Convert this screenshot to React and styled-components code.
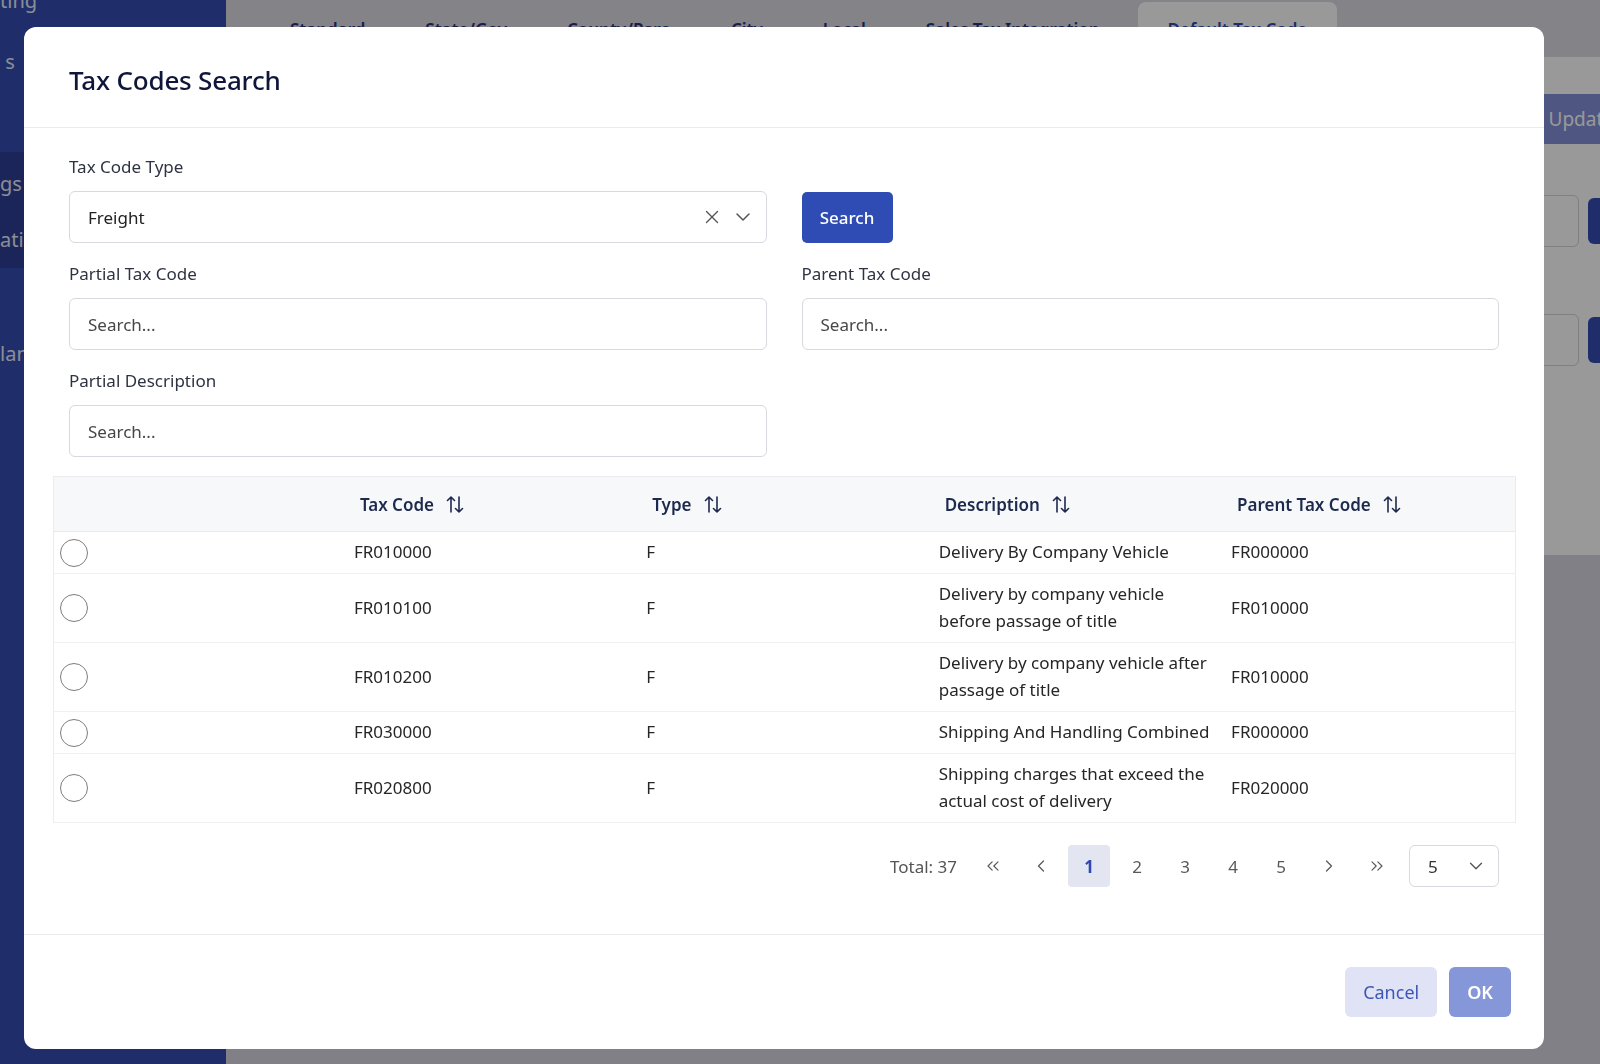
import React from 'react'
import styled, { createGlobalStyle } from 'styled-components'
import { X, ChevronDown, ChevronsLeft, ChevronLeft, ChevronRight, ChevronsRight } from 'lucide-react'

const GlobalStyle = createGlobalStyle`
  * { box-sizing: border-box; }
  html, body { margin: 0; padding: 0; }
  body {
    font-family: "Noto Sans", "Open Sans", sans-serif;
    color: #2a2a2a;
    overflow: hidden;
  }
`

/* ---------- page behind the dialog ---------- */

const Page = styled.div`
  display: grid;
  grid-template-columns: 226px 1fr;
  width: 100vw;
  height: 100vh;
  overflow: hidden;
  background: #d5d5df;
`
const Sidebar = styled.nav`
  background: #344bb2;
  display: flex;
  flex-direction: column;
  overflow: hidden;
`
const NavItem = styled.div`
  height: 56px;
  display: flex;
  align-items: center;
  margin-top: ${p => p.$gap || 0}px;
  font-size: 20px;
  color: #e8ebf7;
  white-space: nowrap;
`
const NavGroup = styled.div`
  margin-top: 63px;
  padding-top: 3px;
  height: 116px;
  background: #2d3f94;
`
const Main = styled.main`
  display: flex;
  flex-direction: column;
  min-width: 0;
`
const TabBar = styled.div`
  height: 57px;
  display: flex;
  align-items: flex-end;
  padding-left: 34px;
  background: #dadae3;
`
const Tab = styled.div`
  height: 55px;
  padding: 0 30px;
  display: flex;
  align-items: center;
  font-size: 17px;
  font-weight: 600;
  white-space: nowrap;
  color: ${p => (p.$active ? '#344bb2' : '#2b3580')};
  background: ${p => (p.$active ? '#ffffff' : 'transparent')};
  border-radius: 8px 8px 0 0;
  margin-left: ${p => p.$push || 0}px;
`
const Card = styled.section`
  height: 498px;
  background: #ffffff;
  display: flex;
  flex-direction: column;
  align-items: flex-end;
  padding-top: 37px;
  margin-right: -60px;
`
const UpdateButton = styled.button`
  height: 50px;
  padding: 0 22px;
  margin-right: 24px;
  border: none;
  border-radius: 6px;
  background: #8490d9;
  color: #ffffff;
  font: inherit;
  font-size: 19px;
`
const CardRow = styled.div`
  display: flex;
  align-items: center;
  gap: 9px;
  margin-right: 20px;
  margin-top: ${p => p.$gap}px;
`
const CardInput = styled.div`
  width: 320px;
  height: 52px;
  border: 1px solid #d4d4dc;
  border-radius: 6px;
`
const CardButton = styled.div`
  width: 52px;
  height: 46px;
  border-radius: 6px;
  background: #344bb2;
`

/* ---------- dialog ---------- */

const Backdrop = styled.div`
  position: fixed;
  inset: 0;
  background: rgba(0, 0, 0, 0.4);
`
const Modal = styled.div`
  position: fixed;
  left: 24px;
  top: 27px;
  width: 1520px;
  height: 1022px;
  background: #ffffff;
  border-radius: 12px;
  display: flex;
  flex-direction: column;
  overflow: hidden;
`
const Header = styled.header`
  height: 101px;
  flex-shrink: 0;
  display: flex;
  align-items: center;
  padding: 5px 0 0 45px;
  border-bottom: 1px solid #e9e9ee;
`
const Title = styled.h2`
  margin: 0;
  font-size: 26px;
  font-weight: 500;
  color: #10163a;
  letter-spacing: -0.2px;
`
const Body = styled.div`
  flex: 1;
  padding: 27px 28px 0 29px;
`
const Form = styled.div`
  display: grid;
  grid-template-columns: 1fr 1fr;
  column-gap: 35px;
  row-gap: 19px;
  padding: 0 17px 0 16px;
`
const Field = styled.div`
  display: flex;
  flex-direction: column;
  justify-content: flex-end;
`
const Label = styled.label`
  font-size: 17px;
  line-height: 24px;
  color: #2e3342;
  margin-bottom: 12px;
`
const Box = styled.div`
  height: 52px;
  border: 1px solid #d8d8de;
  border-radius: 6px;
  display: flex;
  align-items: center;
  padding: 0 11px 0 18px;
  font-size: 17px;
  color: #222;
`
const SelectValue = styled.span`
  flex: 1;
`
const SelectIcons = styled.span`
  display: flex;
  align-items: center;
  gap: 8px;
  color: #555;
`
const TextInput = styled.input`
  height: 52px;
  border: 1px solid #d8d8de;
  border-radius: 6px;
  padding: 0 18px;
  font: inherit;
  font-size: 17px;
  color: #222;
  outline: none;
  &::placeholder { color: #474747; }
`
const PrimaryButton = styled.button`
  width: 91px;
  height: 51px;
  border: none;
  border-radius: 5px;
  background: #2f4bb4;
  color: #ffffff;
  font: inherit;
  font-size: 17px;
  font-weight: 500;
`

const Table = styled.table`
  width: 100%;
  margin-top: 19px;
  border-collapse: collapse;
  table-layout: fixed;
  border: 1px solid #ececf0;
`
const Th = styled.th`
  height: 55px;
  padding: 0 14px;
  text-align: left;
  background: #f7f8fa;
  font-size: 17px;
  font-weight: 600;
  color: #1d2a4d;
  border-bottom: 1px solid #e8e9ee;
`
const HeadInner = styled.span`
  display: inline-flex;
  align-items: center;
  gap: 11px;
`
const Tr = styled.tr`
  border-bottom: 1px solid #f0f0f3;
`
const Td = styled.td`
  padding: 6px 8px 8px;
  font-size: 17px;
  line-height: 27px;
  color: #262626;
  vertical-align: middle;
`
const RadioCell = styled.td`
  padding: 0 6px;
  vertical-align: middle;
`
const Radio = styled.span`
  display: block;
  width: 28px;
  height: 28px;
  border: 1.3px solid #7d7d7d;
  border-radius: 50%;
`

const Pager = styled.div`
  display: flex;
  justify-content: flex-end;
  align-items: center;
  gap: 6px;
  margin-top: 22px;
  padding-right: 17px;
`
const Total = styled.span`
  font-size: 17px;
  color: #555;
  margin-right: 9px;
`
const PageButton = styled.button`
  width: 42px;
  height: 42px;
  border: none;
  border-radius: 4px;
  display: flex;
  align-items: center;
  justify-content: center;
  background: ${p => (p.$active ? '#e3e6f0' : 'transparent')};
  color: ${p => (p.$active ? '#2e4ab2' : '#595959')};
  font: inherit;
  font-size: 17px;
  font-weight: ${p => (p.$active ? 700 : 400)};
  padding: 0;
`
const SizeSelect = styled.div`
  width: 90px;
  height: 42px;
  margin-left: 5px;
  border: 1px solid #d8d8de;
  border-radius: 6px;
  display: flex;
  align-items: center;
  justify-content: space-between;
  padding: 0 11px 0 18px;
  font-size: 17px;
  color: #333;
`

const Footer = styled.footer`
  height: 115px;
  flex-shrink: 0;
  border-top: 1px solid #ececf0;
  display: flex;
  justify-content: flex-end;
  align-items: center;
  gap: 12px;
  padding-right: 33px;
`
const FooterButton = styled.button`
  height: 50px;
  padding: 0 18px;
  border: none;
  border-radius: 6px;
  background: ${p => (p.$primary ? '#8597d8' : '#dfe3f5')};
  color: ${p => (p.$primary ? '#ffffff' : '#3f56b6')};
  font: inherit;
  font-size: 18px;
  font-weight: ${p => (p.$primary ? 600 : 400)};
`

const SortIcon = () => (
  <svg width="20" height="21" viewBox="0 0 20 21" fill="none" stroke="currentColor"
    strokeWidth="1.6" strokeLinecap="round" strokeLinejoin="round">
    <path d="M6 18V3M2.5 6.5L6 3l3.5 3.5" />
    <path d="M14 3v15M10.5 14.5L14 18l3.5-3.5" />
  </svg>
)

const rows = [
  { code: 'FR010000', type: 'F', desc: 'Delivery By Company Vehicle', parent: 'FR000000' },
  { code: 'FR010100', type: 'F', desc: 'Delivery by company vehicle before passage of title', parent: 'FR010000' },
  { code: 'FR010200', type: 'F', desc: 'Delivery by company vehicle after passage of title', parent: 'FR010000' },
  { code: 'FR030000', type: 'F', desc: 'Shipping And Handling Combined', parent: 'FR000000' },
  { code: 'FR020800', type: 'F', desc: 'Shipping charges that exceed the actual cost of delivery', parent: 'FR020000' },
]

const columns = ['Tax Code', 'Type', 'Description', 'Parent Tax Code']

function Background() {
  return (
    <Page>
      <Sidebar>
        <NavItem $gap={-28}>ting</NavItem>
        <NavItem $gap={5}>&nbsp;s</NavItem>
        <NavGroup>
          <NavItem>gs</NavItem>
          <NavItem>atic</NavItem>
        </NavGroup>
        <NavItem $gap={57}>lana</NavItem>
      </Sidebar>
      <Main>
        <TabBar>
          <Tab>Standard</Tab>
          <Tab>State/Gov</Tab>
          <Tab>County/Paro</Tab>
          <Tab>City</Tab>
          <Tab>Local</Tab>
          <Tab>Sales Tax Integration</Tab>
          <Tab $active $push={8}>Default Tax Code</Tab>
        </TabBar>
        <Card>
          <UpdateButton>Update</UpdateButton>
          <CardRow $gap={51}>
            <CardInput />
            <CardButton />
          </CardRow>
          <CardRow $gap={67}>
            <CardInput />
            <CardButton />
          </CardRow>
        </Card>
      </Main>
    </Page>
  )
}

export default function App() {
  return (
    <>
      <GlobalStyle />
      <Background />
      <Backdrop />
      <Modal>
        <Header>
          <Title>Tax Codes Search</Title>
        </Header>
        <Body>
          <Form>
            <Field>
              <Label>Tax Code Type</Label>
              <Box>
                <SelectValue>Freight</SelectValue>
                <SelectIcons>
                  <X size={22} strokeWidth={1.5} />
                  <ChevronDown size={24} strokeWidth={1.5} />
                </SelectIcons>
              </Box>
            </Field>
            <Field>
              <PrimaryButton>Search</PrimaryButton>
            </Field>
            <Field>
              <Label>Partial Tax Code</Label>
              <TextInput placeholder="Search..." />
            </Field>
            <Field>
              <Label>Parent Tax Code</Label>
              <TextInput placeholder="Search..." />
            </Field>
            <Field>
              <Label>Partial Description</Label>
              <TextInput placeholder="Search..." />
            </Field>
          </Form>

          <Table>
            <thead>
              <tr>
                <Th />
                {columns.map(c => (
                  <Th key={c}>
                    <HeadInner>{c}<SortIcon /></HeadInner>
                  </Th>
                ))}
              </tr>
            </thead>
            <tbody>
              {rows.map(r => (
                <Tr key={r.code}>
                  <RadioCell><Radio /></RadioCell>
                  <Td>{r.code}</Td>
                  <Td>{r.type}</Td>
                  <Td>{r.desc}</Td>
                  <Td>{r.parent}</Td>
                </Tr>
              ))}
            </tbody>
          </Table>

          <Pager>
            <Total>Total: 37</Total>
            <PageButton><ChevronsLeft size={20} strokeWidth={1.4} /></PageButton>
            <PageButton><ChevronLeft size={20} strokeWidth={1.5} /></PageButton>
            {[1, 2, 3, 4, 5].map(n => (
              <PageButton key={n} $active={n === 1}>{n}</PageButton>
            ))}
            <PageButton><ChevronRight size={20} strokeWidth={1.5} /></PageButton>
            <PageButton><ChevronsRight size={20} strokeWidth={1.4} /></PageButton>
            <SizeSelect>
              5
              <ChevronDown size={22} strokeWidth={1.5} color="#555" />
            </SizeSelect>
          </Pager>
        </Body>
        <Footer>
          <FooterButton>Cancel</FooterButton>
          <FooterButton $primary>OK</FooterButton>
        </Footer>
      </Modal>
    </>
  )
}
